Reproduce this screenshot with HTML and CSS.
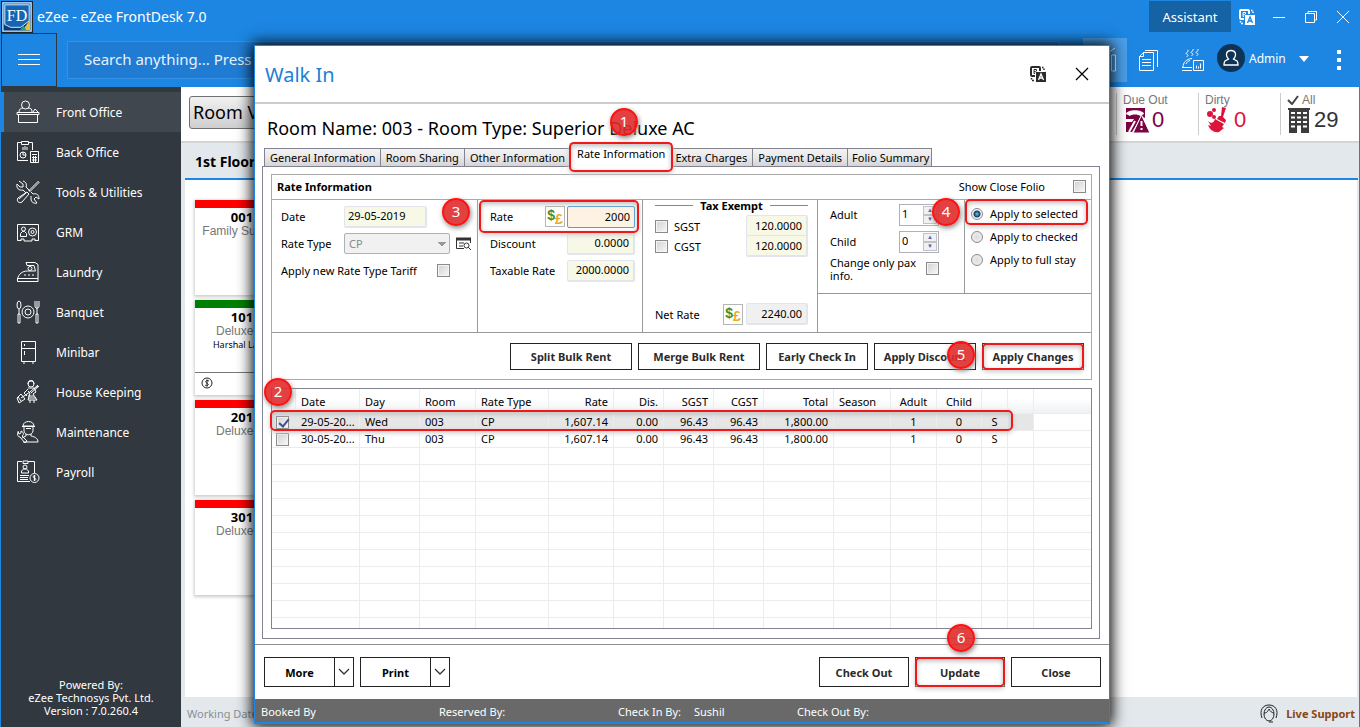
FILE: index.html
```html
<!DOCTYPE html>
<html lang="en">
<head>
<meta charset="UTF-8" />
<meta name="viewport" content="width=device-width, initial-scale=1" />
<title>eZee - eZee FrontDesk 7.0</title>
<link rel="stylesheet" href="styles.css">
</head>
<body>

<svg class="defs" aria-hidden="true">
  <symbol id="translate" viewBox="0 0 16 16">
    <rect x="1" y="1" width="9" height="9" rx="1" fill="none" stroke="currentColor" stroke-width="2"/>
    <path d="M4 3.500h2.500v2H4zM4 5.500h1.500v2H4z" fill="none" stroke="currentColor"/>
    <rect class="edge" x="5.500" y="5.500" width="11" height="11" rx="1" fill="currentColor"/>
    <path class="cut" d="M8.500 14l2.500-6 2.500 6M9.500 12h3" fill="none" stroke-width="1.300"/>
    <path d="M12 1.500h1.500M14 2.500v1.500M1.500 12v1.500M2 14.500h2" fill="none" stroke="currentColor" stroke-width="1.500"/>
  </symbol>
</svg>

<header class="titlebar">
  <svg class="logo" viewBox="0 0 32 32">
    <rect x="1" y="1" width="30" height="30" fill="#1565b5" stroke="#fff"/>
    <path d="M2 23h17l11-9v16H2z" fill="#0d3d6b"/>
    <path d="M22 30l8-11v11z" fill="#e3c33a"/>
    <path d="M19 30l4-5 3 5z" fill="#259b8c"/>
    <path d="M3 3h26v17l-9 7H9l-6-3z" fill="#1565b5" stroke="#e8f1fa"/>
    <text x="16" y="20" text-anchor="middle" font-family="Liberation Serif, serif" font-size="17" fill="#fff">FD</text>
  </svg>
  <span class="app-name">eZee - eZee FrontDesk 7.0</span>
  <button class="assistant">Assistant</button>
  <button class="win-btn" aria-label="Language"><svg class="translate on-blue" width="16" height="16"><use href="#translate"/></svg></button>
  <button class="win-btn" aria-label="Minimize"><svg width="14" height="14"><path d="M1 7.500h12" stroke="#fff"/></svg></button>
  <button class="win-btn" aria-label="Restore"><svg width="14" height="14" fill="none" stroke="#fff"><path d="M1.500 3.500h9v9h-9zM4 3V1.500h8.500V10H11"/></svg></button>
  <button class="win-btn" aria-label="Close window"><svg width="14" height="14"><path d="M1 1l12 12M13 1L1 13" stroke="#fff"/></svg></button>
</header>

<div class="toolbar">
  <button class="menu-btn" aria-label="Menu"><svg width="24" height="14"><path d="M1 1.500h22M1 6.500h22M1 11.500h22" stroke="#fff"/></svg></button>
  <input class="search" type="text" aria-label="Search" placeholder="Search anything... Press ctrl + F">
  <button class="tool active" aria-label="Charts"><svg width="22" height="26" fill="none" stroke="#fff"><path d="M3.500 24V14h4v10zM10.500 24V10h4v14zM17.500 24V8h4v16zM14 6l7-5"/></svg></button>
  <button class="tool" aria-label="Documents"><svg width="22" height="22" fill="none" stroke="#fff"><path d="M1.500 7.500l4-4h10v18h-14zM5.500 3.500v4h-4M7 1.500h12.500V18M4 10.500h9M4 13.500h9M4 16.500h9"/></svg></button>
  <button class="tool" aria-label="Meals report"><svg width="24" height="22" fill="none" stroke="#fff"><path d="M1 18.500h10M1 21.500h10M2 18c0-4 3-8 9-8.500M5 15c1-2 2-3 4-3.500M6.500 1c3 1-3 3-1 4s2 1 0 3M11.500 0c3 1-3 3-1 4s2 1 0 3M16.500 0c3 1-3 3-1 4s2 1 0 3M12.500 11.500h10v10h-10zM15.500 19.500v-3M17.500 19.500v-2M19.500 19.500v-5"/></svg></button>
  <span class="avatar"><svg width="16" height="18" fill="none" stroke="#fff" stroke-width="1.300"><path d="M5.500 10C1.500 5 4 1.500 8 1.500S14.500 5 10.500 10l3.500 2c1 1 1 3 1 4H1c0-1 0-3 1-4z"/></svg></span>
  <span class="user">Admin</span>
  <svg class="caret" width="10" height="6"><path d="M0 0h10L5 6z" fill="#fff"/></svg>
  <button class="dots" aria-label="More options"><svg width="4" height="20"><path d="M0 0h4v4H0zM0 8h4v4H0zM0 16h4v4H0z" fill="#fff"/></svg></button>
</div>

<div class="main">
  <nav class="sidebar">
    <a href="#" class="active"><svg viewBox="0 0 24 24"><path d="M1 12.500h22v2H1zM2.500 14.500h19v8h-19zM3 12c0-3 2-4 4-4M12 8c3 0 4 1 4 4M17 12l2-3 3 3"/><circle cx="9.500" cy="5" r="4"/></svg>Front Office</a>
    <a href="#"><svg viewBox="0 0 24 24"><path d="M12 20.500H1.500v-18H6M13 2.500h3.500V10M5.500 1.500h7v3h-7zM7 10V7M9 10V6M11 10V7M14.500 11.500h8v11h-8zM16 14.500h5M16 17.500h5M16 20h5M17.500 16v6M19.500 16v6"/><circle cx="7" cy="15" r="3"/><path d="M7 12v3h3"/></svg>Back Office</a>
    <a href="#"><svg viewBox="0 0 24 24"><path d="M22.500 1l-10 10M23.500 2l-10 10M11 12l2 2-7 8c-3 2-6-1-4-4zM3 1l4 3v3H4L1 4c-1 4 2 7 6 6l3 3M7 1c3 1 4 3 3 6l4 4M15 16v3c0 3 3 5 6 4l-3-4 2-2 3 2c0-4-2-6-6-5l-2-2M3 19l7-6"/></svg>Tools &amp; Utilities</a>
    <a href="#"><svg viewBox="0 0 24 24"><path d="M5 20.500H1.500v-16h21v16H19M5 21v-2h3v2h8v-2h3v2M4.500 16.500v-3l2-2h2l2 2v3z"/><circle cx="7.500" cy="9" r="2"/><circle cx="16.500" cy="12" r="4"/><circle cx="16.500" cy="12" r="1.500"/></svg>GRM</a>
    <a href="#"><svg viewBox="0 0 24 24"><path d="M10 2.500h9l3 2v17H1.500V19c1-5 5-8 10-8h8L18 5.500h-7zM1 18.500h21M2 21.500h20M8 15h2M12 15h2M16 15h2"/><circle cx="14" cy="8.500" r="2"/></svg>Laundry</a>
    <a href="#"><svg viewBox="0 0 24 24"><circle cx="12" cy="12" r="6"/><circle cx="12" cy="12" r="3"/><ellipse cx="3" cy="5" rx="2" ry="4"/><path d="M3 9v5M2 14h2v9H2zM19 1v5c0 3 4 3 4 0V1M21 1v13M20 14h2v9h-2z"/></svg>Banquet</a>
    <a href="#"><svg viewBox="0 0 24 24"><path d="M5.500 1.500h14v20h-14zM5 8.500h15M8.500 4v2M8.500 11v4M7 23h2M16 23h2"/></svg>Minibar</a>
    <a href="#"><svg viewBox="0 0 24 24"><circle cx="15" cy="4" r="3"/><path d="M12 4c0-5 6-5 6 0M12 8h6l2 4-3 2 4 6h-9l2-7-2-2M22 5l-8 7L5 18M23 6l-8 7M5 14l4 5-6 4-2-5zM14 20v3M18 20v3M2 17l3 4M18 9l4-3M12 9l-4 4 3 3M12 16h6M13 18h7"/></svg>House Keeping</a>
    <a href="#"><svg viewBox="0 0 24 24"><path d="M7 6c0-6 11-6 11 0zM6 6.500h13M8 7v4c1 5 8 5 9 0V7M10 14v2l-4 2M15 14v2c5 1 7 3 7 6H7M2 11l1 3 2-1v-2c3 1 3 4 1 5l5 5-2 2-5-6c-2 0-3-2-2-5M10 8.500h5"/></svg>Maintenance</a>
    <a href="#"><svg viewBox="0 0 24 24"><path d="M14 21.500H1.500v-20H6M12 1.500h6.500V13M7 3.500h5V1H7zM5.500 13v-2l2-2h3l2 2v2zM4 15.500h9M4 17.500h8M4 19.500h8M19.500 16c-3-1-3 2-1 2s2 3-1 2M18.500 15v6"/><circle cx="9" cy="7" r="2"/><circle cx="18.500" cy="18" r="4.500"/></svg>Payroll</a>
    <p class="powered">Powered By:<br>eZee Technosys Pvt. Ltd.<br>Version : 7.0.260.4</p>
  </nav>

  <div class="content">
    <div class="summary">
      <button class="view-btn">Room View</button>
      <div class="tile due">
        <span>Due Out</span>
        <div><svg width="24" height="26"><path d="M1 1h19v10l-4-2-6 11-3 5H1V15h6l2-3H1z" fill="#7b0443"/><path d="M1 7c1-5 17-5 18 0l-4 2c-1-2-9-2-10 0z" fill="#fff"/><path d="M4 25l6-11" stroke="#fff" stroke-width="2"/><path d="M16.500 8L25 26H8z" fill="#7b0443" stroke="#fff"/><path d="M16.500 14v5M16.500 21v2" stroke="#fff" stroke-width="2"/></svg><b>0</b></div>
      </div>
      <div class="tile dirty">
        <span>Dirty</span>
        <div><svg width="24" height="26" fill="#dc143c"><circle cx="9" cy="3" r="2"/><circle cx="5" cy="7" r="3"/><circle cx="9" cy="10" r="2"/><path d="M17 0l4 1-3 9 3 3-1 3-8-4 2-3h2zM10 12l9 5-2 3 2 1-5 4c-5 1-9-2-11-7l3 1-3-5c3 3 6 2 7-2z"/></svg><b>0</b></div>
      </div>
      <div class="tile all">
        <span><svg width="12" height="10"><path d="M1 5l4 4 6-8" fill="none" stroke="#444" stroke-width="2"/></svg> All</span>
        <div><svg width="24" height="26"><path d="M2 1h20v25H2zM1 1h22v2H1z" fill="#3c3c3c"/><path d="M4 6h16M4 10.500h16M4 15h16M4 19.500h16" stroke="#fff" stroke-width="2" stroke-dasharray="4 2"/><path d="M10 20h4v6h-4z" fill="#fff"/></svg><b>29</b></div>
      </div>
    </div>
    <div class="floor">1st Floor</div>
    <div class="rooms">
      <article class="room"><b>001</b><span>Family Suite AC</span></article>
      <article class="room occupied"><b>101</b><span>Deluxe-AC</span><small>Harshal Lakhani</small>
        <footer><svg width="12" height="12" fill="none" stroke="#222"><circle cx="6" cy="6" r="5"/><path d="M8 4C6 3 4 4 5 5.500s3 1 2 2.500-2 .5-3 0M6 2.500v7"/></svg></footer></article>
      <article class="room"><b>201</b><span>Deluxe-AC</span></article>
      <article class="room"><b>301</b><span>Deluxe-AC</span></article>
    </div>
    <div class="statusbar">
      <span>Working Date</span>
      <a href="#" class="support"><svg width="18" height="20" fill="none" stroke="#222"><ellipse cx="9" cy="10" rx="5" ry="7"/><path d="M2 14C-1 6 3 1 9 1s10 5 7 13M4 9c4 0 4-3 5-4 1 2 3 4 5 4M9 18h4"/></svg>Live Support</a>
    </div>
  </div>
</div>

<section class="dialog" role="dialog" aria-label="Walk In">
  <div class="dialog-head">
    <h1>Walk In</h1>
    <button aria-label="Translate"><svg class="translate" width="16" height="16"><use href="#translate"/></svg></button>
    <button aria-label="Close dialog"><svg width="14" height="14"><path d="M1 1l12 12M13 1L1 13" stroke="#000" stroke-width="1.300"/></svg></button>
  </div>

  <div class="dialog-body">
    <h2>Room Name: 003 - Room Type: Superior Deluxe AC</h2>
    <div class="tabs">
      <button>General Information</button>
      <button class="roomy">Room Sharing</button>
      <button class="roomy">Other Information</button>
      <button class="current marked">Rate Information<i class="step s1">1</i></button>
      <button class="roomy">Extra Charges</button>
      <button class="roomy">Payment Details</button>
      <button class="last">Folio Summary</button>
    </div>

    <div class="tab-page">
      <form class="group">
        <div class="group-head">
          <h3>Rate Information</h3>
          <label for="closeFolio">Show Close Folio</label>
          <input type="checkbox" id="closeFolio">
        </div>

        <div class="fields">
          <div class="cell tall">
            <div class="row"><label for="date" class="w63">Date</label><input type="text" id="date" class="w83" value="29-05-2019"></div>
            <div class="row"><label for="rateType" class="w63">Rate Type</label>
              <select id="rateType" disabled><option>CP</option></select>
              <button type="button" class="lookup" aria-label="Find rate type"><svg width="15" height="13" fill="none" stroke="#333"><path d="M14.500 6V1.500H.5v10H8" /><path d="M0 2h15" stroke-width="3"/><path d="M3 6h5M3 9h4M12 10l3 3"/><circle cx="10.500" cy="8.500" r="2.500"/></svg></button>
            </div>
            <div class="row"><label for="newTariff" class="w156">Apply new Rate Type Tariff</label><input type="checkbox" id="newTariff"></div>
          </div>

          <div class="cell tall amounts">
            <div class="row marked"><label for="rate">Rate</label>
              <button type="button" class="money" aria-label="Currency"><span>$</span><span>£</span></button>
              <input type="text" id="rate" class="num w68 focus" value="2000"><i class="step s3">3</i>
            </div>
            <div class="row"><label for="discount">Discount</label><input type="text" id="discount" class="num w68" value="0.0000"></div>
            <div class="row"><label for="taxable">Taxable Rate</label><input type="text" id="taxable" class="num w68" value="2000.0000"></div>
          </div>

          <div class="cell tall tax">
            <div class="legend">Tax Exempt</div>
            <div class="row"><input type="checkbox" id="sgst"><label for="sgst">SGST</label><input type="text" class="num w62" aria-label="SGST amount" value="120.0000"></div>
            <div class="row"><input type="checkbox" id="cgst"><label for="cgst">CGST</label><input type="text" class="num w62" aria-label="CGST amount" value="120.0000"></div>
            <div class="row net"><label for="net">Net Rate</label>
              <button type="button" class="money" aria-label="Net currency"><span>$</span><span>£</span></button>
              <input type="text" id="net" class="num w62 readonly" value="2240.00" readonly></div>
          </div>

          <div class="cell pax">
            <div class="row"><label for="adult">Adult</label><span class="spin"><input type="text" id="adult" value="1"><span><button type="button" aria-label="More adults">▲</button><button type="button" aria-label="Fewer adults">▼</button></span></span></div>
            <div class="row"><label for="child">Child</label><span class="spin"><input type="text" id="child" value="0"><span><button type="button" aria-label="More children">▲</button><button type="button" aria-label="Fewer children">▼</button></span></span></div>
            <div class="row"><label for="paxOnly" class="wrap">Change only pax info.</label><input type="checkbox" id="paxOnly"></div>
          </div>

          <div class="cell apply">
            <label class="marked"><input type="radio" name="apply" checked>Apply to selected<i class="step s4">4</i></label>
            <label><input type="radio" name="apply">Apply to checked</label>
            <label><input type="radio" name="apply">Apply to full stay</label>
          </div>
          <div class="cell rest"></div>
        </div>

        <div class="actions">
          <button type="button" class="btn wide">Split Bulk Rent</button>
          <button type="button" class="btn wide">Merge Bulk Rent</button>
          <button type="button" class="btn mid">Early Check In</button>
          <button type="button" class="btn mid">Apply Discount</button>
          <button type="button" class="btn mid marked">Apply Changes<i class="step s5">5</i></button>
        </div>
      </form>

      <div class="rates">
        <div class="rates-scroll">
          <table id="ratesTable">
            <colgroup>
              <col class="c24"><col class="c64"><col class="c60"><col class="c56"><col class="c73"><col class="c65">
              <col class="c50"><col class="c50"><col class="c50"><col class="c70"><col class="c57"><col class="c46">
              <col class="c45"><col class="c26"><col class="c26"><col>
            </colgroup>
            <thead>
              <tr>
                <th></th><th>Date</th><th>Day</th><th>Room</th><th>Rate Type</th><th class="r">Rate</th>
                <th class="r">Dis.</th><th class="r">SGST</th><th class="r">CGST</th><th class="r">Total</th><th>Season</th>
                <th class="c">Adult</th><th class="c">Child</th><th></th><th></th><th></th>
              </tr>
            </thead>
            <tbody></tbody>
          </table>
        </div>
        <div class="row-mark"></div>
        <i class="step s2">2</i>
      </div>
    </div>
  </div>

  <div class="dialog-foot">
    <div class="split"><button>More</button><button aria-label="More menu"><svg width="12" height="8"><path d="M1 1l5 5 5-5" fill="none" stroke="#333" stroke-width="1.300"/></svg></button></div>
    <div class="split"><button>Print</button><button aria-label="Print menu"><svg width="12" height="8"><path d="M1 1l5 5 5-5" fill="none" stroke="#333" stroke-width="1.300"/></svg></button></div>
    <span class="spacer"></span>
    <button class="btn">Check Out</button>
    <button class="btn marked">Update<i class="step s6">6</i></button>
    <button class="btn">Close</button>
  </div>

  <div class="dialog-info">
    <span>Booked By</span><span>Reserved By:</span><span>Check In By:</span><span>Sushil</span><span>Check Out By:</span>
  </div>
</section>

<script>
const rates = [
  { checked: true, date: '29-05-20...', day: 'Wed' },
  { checked: false, date: '30-05-20...', day: 'Thu' }
];
const tbody = document.querySelector('#ratesTable tbody');

rates.forEach(r => {
  tbody.insertAdjacentHTML('beforeend', `<tr class="${r.checked ? 'selected' : ''}">
    <td><input type="checkbox" aria-label="Select ${r.day}" ${r.checked ? 'checked' : ''}></td>
    <td>${r.date}</td><td>${r.day}</td><td>003</td><td>CP</td>
    <td class="r">1,607.14</td><td class="r">0.00</td><td class="r">96.43</td><td class="r">96.43</td>
    <td class="r">1,800.00</td><td></td><td class="c">1</td><td class="c">0</td><td class="c">S</td><td></td><td></td>
  </tr>`);
});

// fill the rest of the grid with blank rows
for (let i = 0; i < 30; i++) {
  tbody.insertAdjacentHTML('beforeend', '<tr>' + '<td></td>'.repeat(16) + '</tr>');
}
</script>

</body>
</html>
```
FILE: styles.css
```css
* {
  box-sizing: border-box;
}
body {
  margin: 0;
  height: 100vh;
  display: flex;
  flex-direction: column;
  overflow: hidden;
  border: solid #1c86e2;
  border-width: 0 1px;
  background: #1c86e2;
  font: 11px "Noto Sans", sans-serif;
  color: #000;
}
button, input, select {
  font: inherit;
  color: inherit;
  margin: 0;
  padding: 0;
}
button {
  background: none;
  border: none;
  display: flex;
  align-items: center;
  justify-content: center;
}
svg {
  display: block;
  flex: none;
}
a {
  text-decoration: none;
}
h1, h2, h3, p {
  margin: 0;
  font-weight: normal;
}
.defs {
  display: none;
}

/* title bar */
.titlebar {
  display: flex;
  align-items: center;
  height: 33px;
  color: #fff;
}
.logo {
  width: 32px;
  height: 32px;
  border: 1px solid #222;
}
.app-name {
  flex: 1;
  margin-left: 4px;
  font-size: 14px;
}
.assistant {
  width: 82px;
  height: 31px;
  background: #1563a5;
  font-size: 13px;
}
.win-btn {
  width: 32px;
  height: 32px;
}
.translate {
  color: #2b2b2b;
  --back: #fff;
}
.translate.on-blue {
  color: #fff;
  --back: #1c86e2;
}
.cut, .edge {
  stroke: var(--back);
}

/* search and tools */
.toolbar {
  display: flex;
  align-items: center;
  height: 54px;
  color: #fff;
}
.menu-btn {
  width: 56px;
  height: 54px;
  border: 1px solid #30373e;
}
.search {
  flex: 1;
  height: 38px;
  margin: 0 24px 0 10px;
  padding: 0 16px 2px;
  background: #1f7cd2;
  border: 1px solid #3592e6;
  font-size: 15px;
}
.search::placeholder {
  color: #e6f1fb;
}
.tool {
  width: 44px;
  height: 44px;
}
.tool.active {
  background: #4a9ee8;
}
.avatar {
  display: grid;
  place-items: center;
  width: 28px;
  height: 28px;
  margin: 0 4px 4px 2px;
  border-radius: 50%;
  background: #0e3355;
}
.user {
  width: 50px;
  margin-bottom: 4px;
  font-size: 12px;
}
.caret {
  margin-bottom: 2px;
}
.dots {
  width: 20px;
  height: 40px;
  margin: 0 10px 0 20px;
}

/* sidebar */
.main {
  flex: 1;
  display: flex;
  min-height: 0;
}
.sidebar {
  width: 180px;
  display: flex;
  flex-direction: column;
  padding-top: 5px;
  background: #31383f;
}
.sidebar a {
  display: flex;
  align-items: center;
  gap: 16px;
  height: 40px;
  padding-left: 15px;
  color: #fff;
  font-size: 12px;
}
.sidebar a.active {
  background: #40474e;
  border-left: 3px solid #1c86e2;
  padding-left: 12px;
}
.sidebar svg {
  width: 24px;
  height: 24px;
  fill: none;
  stroke: #fff;
}
.powered {
  margin: auto 0 10px;
  text-align: center;
  line-height: 13px;
  color: #fff;
}

/* room view behind the dialog */
.content {
  flex: 1;
  display: flex;
  flex-direction: column;
  min-width: 0;
  background: #e3e8ec;
}
.summary {
  display: flex;
  align-items: center;
  height: 56px;
  background: #fff;
  border-bottom: 2px solid #d5d5d5;
}
.view-btn {
  width: 180px;
  height: 33px;
  margin: 0 auto 4px 8px;
  justify-content: flex-start;
  padding-left: 3px;
  border: 1px solid #707070;
  border-radius: 3px;
  background: linear-gradient(#f2f2f2, #dedede 50%, #cfcfcf);
  font-size: 18px;
}
.tile {
  width: 82px;
  height: 42px;
  padding-left: 6px;
  border-left: 1px solid #ccc;
  font: 12px "Liberation Sans", sans-serif;
  color: #777;
}
.tile.all {
  width: 79px;
}
.tile span, .tile div {
  display: flex;
  align-items: center;
  gap: 3px;
}
.tile.due div {
  padding-left: 2px;
}
.tile.dirty div {
  gap: 5px;
}
.tile b {
  font-size: 22px;
  font-weight: normal;
}
.due b {
  color: #7b0443;
}
.dirty b {
  color: #dc143c;
}
.all b {
  color: #333;
}
.floor {
  height: 32px;
  margin: 5px 1px 0 4px;
  padding-left: 10px;
  border-bottom: 2px solid #1c86e2;
  font-size: 14px;
  font-weight: bold;
  line-height: 28px;
}
.rooms {
  flex: 1;
  min-height: 0;
  overflow: hidden;
  display: flex;
  flex-direction: column;
  gap: 5px;
  margin: 0 2px 0 4px;
  padding: 20px 0 0 10px;
  background: #fff;
}
.room {
  flex: none;
  width: 120px;
  height: 95px;
  display: flex;
  flex-direction: column;
  align-items: center;
  border-top: 8px solid #f00;
  box-shadow: 0 1px 3px 1px #ccc;
  font-size: 12px;
  line-height: 14px;
  padding-top: 2px;
}
.room.occupied {
  border-color: #008000;
}
.room b {
  font-size: 13px;
  padding-right: 26px;
}
.room span {
  color: #777;
  padding-right: 20px;
  font-family: "Liberation Sans", sans-serif;
}
.room small {
  font-size: 9px;
  padding-right: 16px;
}
.room footer {
  width: 100%;
  margin-top: auto;
  padding: 4px 6px 6px;
  border-top: 1px solid #777;
}
.statusbar {
  display: flex;
  align-items: center;
  justify-content: space-between;
  height: 30px;
  padding: 3px 4px 0 6px;
  color: #888f96;
}
.support {
  display: flex;
  align-items: center;
  gap: 8px;
  color: #8b4513;
  font-weight: bold;
}

/* walk in dialog */
.dialog {
  position: absolute;
  top: 45px;
  left: 254px;
  right: 250px;
  bottom: 3px;
  display: flex;
  flex-direction: column;
  background: #fff;
  border: 2px solid #1c86e2;
  border-width: 1px 1px 2px;
  box-shadow: 0 0 14px 2px #000;
}
.dialog-head {
  display: flex;
  align-items: center;
  gap: 14px;
  height: 58px;
  padding: 0 12px 0 10px;
  border-bottom: 2px solid #ccc;
}
.dialog-head h1 {
  flex: 1;
  font-size: 20px;
  color: #1c7fd6;
}
.dialog-head button {
  width: 30px;
  height: 30px;
}
.dialog-body {
  flex: 1;
  min-height: 0;
  display: flex;
  flex-direction: column;
  padding: 10px 9px 5px 7px;
  border-bottom: 1px solid #8f8f94;
}
.dialog-body h2 {
  padding-left: 5px;
  font-size: 18px;
  line-height: 28px;
}
.tabs {
  display: flex;
  align-items: flex-end;
  height: 25px;
  margin-bottom: -1px;
  padding-left: 2px;
}
.tabs button {
  height: 19px;
  padding: 0 4px 0 5px;
  white-space: nowrap;
  border: 1px solid #83838f;
  margin-right: -1px;
  background: linear-gradient(#f3f3f3, #e8e8e8 50%, #d4d4d8);
}
.tabs .roomy {
  padding: 0 5px;
}
.tabs .last {
  padding: 0 2px 0 4px;
}
.tabs .current {
  height: 24px;
  padding: 0 6px 3px;
  background: #fff;
  border-bottom-color: #fff;
}
.tabs .current + button {
  padding-left: 3px;
}
.tab-page {
  flex: 1;
  min-height: 0;
  display: flex;
  flex-direction: column;
  gap: 8px;
  padding: 7px 7px 9px 8px;
  border: 1px solid #83838f;
}
.group {
  border: 1px solid #aaa;
}
.group-head {
  display: flex;
  align-items: center;
  height: 25px;
  padding: 0 5px 2px;
  border-bottom: 1px solid #aaa;
}
.group-head h3 {
  flex: 1;
  font-size: 11px;
  font-weight: bold;
}
.group-head label {
  margin-right: 28px;
}
.fields {
  display: grid;
  grid-template-columns: 206px 165px 175px 147px 1fr;
  grid-template-rows: 94px 39px;
}
.cell {
  padding: 3px 9px 0;
  border-right: 1px solid #999;
  border-bottom: 1px solid #999;
}
.cell.tall {
  grid-row: span 2;
}
.cell.amounts {
  padding: 3px 7px 0 12px;
}
.cell.tax {
  padding: 0 9px 0 12px;
}
.cell.pax {
  padding: 1px 25px 0 12px;
}
.cell.apply {
  padding: 2px 3px 0 0;
  border-right: none;
}
.cell.rest {
  grid-column: 4 / 6;
  border-right: none;
}
.row {
  display: flex;
  align-items: center;
  height: 27px;
}
.amounts label, .net label, .pax label {
  flex: 1;
}
.w63 {
  width: 63px;
}
.w83 {
  width: 83px;
}
.w156 {
  width: 156px;
}
.w68 {
  width: 68px;
}
.w62 {
  width: 62px;
}
.fields input[type=text] {
  height: 22px;
  padding: 0 4px 1px 3px;
  border: 2px solid #e2e4ee;
  border-width: 1px 2px 2px 1px;
  border-radius: 2px;
  background: #f8f8e6;
}
.fields .num {
  text-align: right;
  padding: 0 2px;
}
.fields input.focus {
  border: 1px solid #5b9bd0;
  background: #fdf2e4;
}
.fields input.readonly {
  background: #f0f0f0;
}
.fields .row > .w63, .fields select, .fields .lookup {
  flex: none;
}
select {
  appearance: none;
  width: 106px;
  height: 21px;
  padding-left: 4px;
  border: 1px solid #aeb2b8;
  border-radius: 2px;
  background: linear-gradient(45deg, transparent 50%, #999 50%) 93px 8px / 4px 4px no-repeat,
    linear-gradient(-45deg, transparent 50%, #999 50%) 97px 8px / 4px 4px no-repeat, #f1f1f1;
}
select:disabled {
  color: #888;
  opacity: 1;
}
.lookup {
  margin-left: 6px;
}
.money {
  width: 20px;
  height: 21px;
  margin-right: 2px;
  border: 1px solid #b5b5b5;
  background: #fff;
  font: bold 14px "Liberation Sans", sans-serif;
}
.money span {
  padding-bottom: 3px;
  color: #3f8f2d;
}
.money span + span {
  padding: 4px 0 0;
  color: #f0a81c;
}
.net .money {
  margin-right: 3px;
}
input[type=checkbox] {
  appearance: none;
  flex: none;
  width: 13px;
  height: 13px;
  border: 1px solid #8a8a8a;
  background: linear-gradient(135deg, #cfd1d5, #f8f8f8);
  box-shadow: inset 0 0 0 1px #f4f4f4;
}
input[type=checkbox]:checked::after {
  content: "";
  display: block;
  width: 4px;
  height: 8px;
  margin: 0 0 0 4px;
  border: solid #3f4f94;
  border-width: 0 2px 2px 0;
  transform: rotate(40deg);
}
input[type=radio] {
  appearance: none;
  width: 12px;
  height: 12px;
  margin: 0 7px 0 6px;
  border: 1px solid #8a8a8a;
  border-radius: 50%;
  background: radial-gradient(#ddd, #f4f4f4);
}
input[type=radio]:checked {
  background: radial-gradient(circle at 5px 5px, #6cc4ee, #123c62 3px, #f4f4f4 4px);
}
.legend {
  display: flex;
  align-items: center;
  justify-content: space-between;
  height: 11px;
  margin-bottom: 5px;
  font-weight: bold;
}
.legend::before, .legend::after {
  content: "";
  width: 38px;
  border-top: 1px solid #888;
}
.tax .row {
  height: 20px;
}
.tax .row > label {
  flex: 1;
  margin-left: 6px;
}
.tax .net {
  margin-top: 48px;
}
.tax .net > label {
  margin-left: 0;
}
.spin {
  display: flex;
  width: 40px;
  height: 22px;
  border: 1px solid #b0b0b8;
  padding: 1px;
}
.fields .spin input {
  width: 22px;
  height: 16px;
  padding: 0 0 0 1px;
  border: none;
  background: #fff;
}
.spin button {
  width: 14px;
  height: 9px;
  border: 1px solid #c2c2c8;
  background: #f1f1f1;
  color: #5365a8;
  font-size: 6px;
  line-height: 6px;
}
.wrap {
  line-height: 13px;
}
.apply label {
  display: flex;
  align-items: center;
  height: 23px;
}
.apply input {
  flex: none;
}
.actions {
  display: flex;
  justify-content: flex-end;
  gap: 6px;
  padding: 10px 7px 9px;
}
.btn {
  width: 90px;
  height: 30px;
  border: 1px solid #222;
  background: #fff;
  font-weight: bold;
  color: #2b2b2b;
}
.actions .btn {
  height: 27px;
}
.actions .wide {
  width: 122px;
}
.actions .mid {
  width: 102px;
}

/* rates grid */
.rates {
  position: relative;
  flex: 1;
  min-height: 0;
}
.rates-scroll {
  height: 100%;
  overflow: hidden;
  border: 1px solid #83838f;
}
table {
  width: 100%;
  table-layout: fixed;
  border-collapse: separate;
  border-spacing: 0;
}
th, td {
  height: 17px;
  padding: 0 5px;
  border-right: 1px solid #ececec;
  border-bottom: 1px solid #ececec;
  font-weight: normal;
  line-height: 16px;
  text-align: left;
  white-space: nowrap;
}
th {
  height: 25px;
  padding-top: 2px;
  background: linear-gradient(#fff 40%, #f0f1f3);
}
td:first-child {
  padding: 0 4px;
  border-right: none;
}
td input {
  display: block;
}
th:last-child, td:last-child {
  border-right: none;
}
.r {
  text-align: right;
}
.c {
  text-align: center;
}
.selected td {
  background: #e6e6e6;
}
.selected td:last-child {
  background: #fff;
}
.c24 { width: 24px; }
.c64 { width: 64px; }
.c60 { width: 60px; }
.c56 { width: 56px; }
.c73 { width: 73px; }
.c65 { width: 65px; }
.c50 { width: 50px; }
.c70 { width: 70px; }
.c57 { width: 57px; }
.c46 { width: 46px; }
.c45 { width: 45px; }
.c26 { width: 26px; }

/* numbered steps */
.marked {
  position: relative;
}
.marked::after, .row-mark {
  content: "";
  position: absolute;
  inset: -1px;
  border: 2px solid #f01818;
  border-radius: 5px;
  box-shadow: inset 0 2px 5px #bbb, 0 2px 5px #ccc;
  pointer-events: none;
}
.tabs .marked::after {
  inset: -2px -2px -6px;
}
.row.marked::after {
  inset: -3px -4px -3px -11px;
}
.apply .marked::after {
  inset: -3px 0 0;
}
.row-mark {
  inset: 22px auto auto -1px;
  width: 743px;
  height: 21px;
}
.step {
  position: absolute;
  z-index: 2;
  width: 28px;
  height: 28px;
  border: 2px solid #f11;
  border-radius: 50%;
  background: rgba(224, 44, 44, 0.9);
  box-shadow: 1px 2px 5px #888;
  color: #fff;
  font-size: 15px;
  font-style: normal;
  font-weight: normal;
  line-height: 23px;
  text-align: center;
}
.s1 { top: -36px; left: 39px; }
.s2 { top: -10px; left: -7px; }
.s3 { top: -5px; left: -48px; }
.s4 { top: -4px; left: -33px; }
.s5 { top: -3px; left: -36px; }
.s6 { top: -34px; left: 31px; }

/* dialog footer */
.dialog-foot {
  display: flex;
  gap: 6px;
  padding: 12px 8px 12px 9px;
}
.split {
  display: flex;
  height: 30px;
  border: 1px solid #222;
}
.split button {
  width: 69px;
  font-weight: bold;
}
.split button + button {
  width: 19px;
  border-left: 1px solid #222;
}
.spacer {
  flex: 1;
}
.dialog-info {
  display: grid;
  grid-template-columns: 178px 179px 76px 103px 1fr;
  align-items: center;
  height: 23px;
  padding: 2px 6px 0;
  background: #696969;
  color: #fff;
}
```
